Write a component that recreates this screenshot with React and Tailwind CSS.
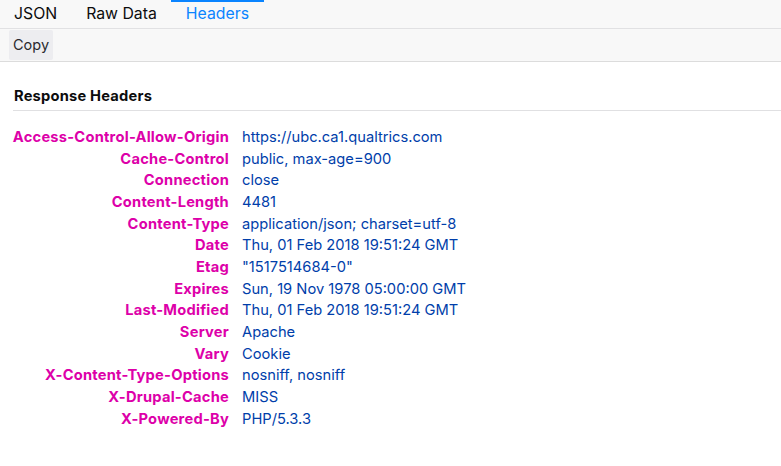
import React from "react";

const rows = [
  ["Access-Control-Allow-Origin", "https://ubc.ca1.qualtrics.com"],
  ["Cache-Control", "public, max-age=900"],
  ["Connection", "close"],
  ["Content-Length", "4481"],
  ["Content-Type", "application/json; charset=utf-8"],
  ["Date", "Thu, 01 Feb 2018 19:51:24 GMT"],
  ["Etag", "\"1517514684-0\""],
  ["Expires", "Sun, 19 Nov 1978 05:00:00 GMT"],
  ["Last-Modified", "Thu, 01 Feb 2018 19:51:24 GMT"],
  ["Server", "Apache"],
  ["Vary", "Cookie"],
  ["X-Content-Type-Options", "nosniff, nosniff"],
  ["X-Drupal-Cache", "MISS"],
  ["X-Powered-By", "PHP/5.3.3"],
];

export default function App() {
  return (
    <div className="w-[781px] h-[466px] bg-white overflow-hidden" style={{ fontFamily: 'Inter, "Liberation Sans", Arial, sans-serif' }}>
      <div className="h-[29px] bg-[#f8f8f8] border-b border-[#e1e1e3] flex items-stretch text-[15.8px] text-[#0c0c0d]">
        <div className="pl-[14px] pr-[14px] flex items-center h-[28px]">JSON</div>
        <div className="pl-[15px] pr-[14px] flex items-center h-[28px]">Raw Data</div>
        <div className="px-[15px] border-t-2 border-[#0a84ff] flex items-center justify-center text-[#0a84ff] h-[28px] pb-[2px]">Headers</div>
      </div>
      <div className="h-[33px] bg-[#f8f8f8] border-b border-[#dcdcdc] flex items-center pl-[9px]">
        <div className="h-[30px] px-[4px] bg-[#ededf0] rounded-[2px] flex items-center text-[14.5px] text-[#2a2a2e]">Copy</div>
      </div>
      <div className="pl-[13px]">
        <div className="h-[49px] border-b border-[#e0e0e2] flex items-end pb-[3px] pl-[1px] text-[14.7px] tracking-[0.2px] font-bold text-[#0c0c0d]">Response Headers</div>
        <div className="pt-[15px]">
          {rows.map(([k, v]) => (
            <div key={k} className="flex h-[21.7px] items-center text-[14.7px] whitespace-nowrap">
              <div className="w-[216px] shrink-0 flex justify-end font-bold tracking-[0.22px] text-[#dd00a9]">
                <span>{k}</span>
              </div>
              <div className="pl-[13px] text-[#003eaa]">{v}</div>
            </div>
          ))}
        </div>
      </div>
    </div>
  );
}
